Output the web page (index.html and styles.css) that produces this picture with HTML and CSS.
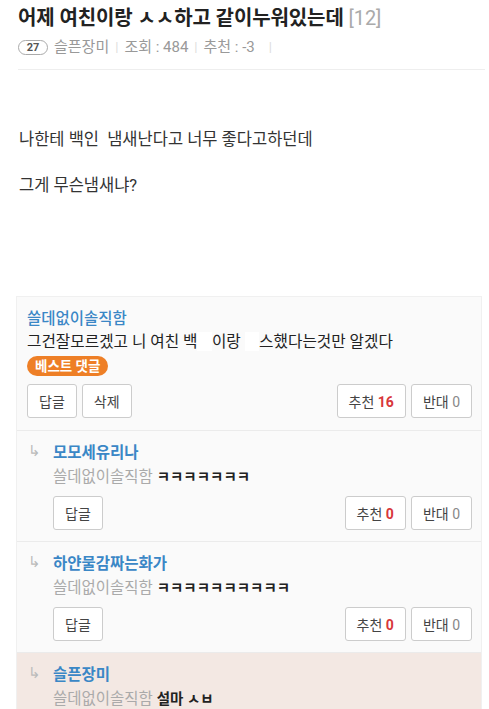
FILE: index.html
```html
<!DOCTYPE html>
<html>
	<head>
		<meta charset="UTF-8">
		<title>게시글</title>
		<link rel="stylesheet" href="styles.css">
	</head>
	<body>
		<div class="post-head">
			<h1 class="post-title">어제 여친이랑 ㅅㅅ하고 같이누워있는데 <span class="cmt-count">[12]</span></h1>
			<div class="post-meta">
				<span class="level">27</span>
				<span class="writer">슬픈장미</span>
				<span class="bar">|</span>
				<span>조회 : 484</span>
				<span class="bar">|</span>
				<span>추천 : -3</span>
				<span class="bar">|</span>
			</div>
		</div>

		<div class="post-body">
			<p>나한테 백인&nbsp; 냄새난다고 너무 좋다고하던데</p>
			<p><br></p>
			<p>그게 무슨냄새냐?</p>
		</div>

		<div class="comments">
			<div class="cmt">
				<div class="cmt-name">쓸데없이솔직함</div>
				<div class="cmt-text">그건잘모르겠고 니 여친 백<span class="mask">인</span>이랑 <span class="mask">섹</span>스했다는것만 알겠다</div>
				<span class="best">베스트 댓글</span>
				<div class="cmt-btns">
					<button class="btn">답글</button>
					<button class="btn">삭제</button>
					<span class="spacer"></span>
					<button class="btn">추천 <b class="red">16</b></button>
					<button class="btn">반대 <span class="num">0</span></button>
				</div>
			</div>
			<div class="cmt reply">
				<span class="arrow">↳</span>
				<div class="cmt-name">모모세유리나</div>
				<div class="cmt-text"><span class="to">쓸데없이솔직함</span> <b>ㅋㅋㅋㅋㅋㅋㅋ</b></div>
				<div class="cmt-btns">
					<button class="btn">답글</button>
					<span class="spacer"></span>
					<button class="btn">추천 <b class="red">0</b></button>
					<button class="btn">반대 <span class="num">0</span></button>
				</div>
			</div>
			<div class="cmt reply">
				<span class="arrow">↳</span>
				<div class="cmt-name">하얀물감짜는화가</div>
				<div class="cmt-text"><span class="to">쓸데없이솔직함</span> <b>ㅋㅋㅋㅋㅋㅋㅋㅋㅋㅋ</b></div>
				<div class="cmt-btns">
					<button class="btn">답글</button>
					<span class="spacer"></span>
					<button class="btn">추천 <b class="red">0</b></button>
					<button class="btn">반대 <span class="num">0</span></button>
				</div>
			</div>
			<div class="cmt reply mine">
				<span class="arrow">↳</span>
				<div class="cmt-name">슬픈장미</div>
				<div class="cmt-text"><span class="to">쓸데없이솔직함</span> <b>설마 ㅅㅂ</b></div>
			</div>
		</div>
	</body>
</html>
```

FILE: styles.css
```css
*{
	margin: 0;
	padding: 0;
	box-sizing: border-box;
}
body{
	font-family: Roboto, "Noto Sans CJK KR", sans-serif;
	color: #333;
	background: #fff;
	width: 489px;
	height: 709px;
	overflow: hidden;
}
.post-head{
	margin: 4px 4px 0 18px;
	padding-bottom: 12px;
	border-bottom: 1px solid #eee;
}
.post-title{
	font-size: 20px;
	line-height: 28px;
	font-weight: bold;
	color: #222;
	letter-spacing: -0.1px;
}
.post-title .cmt-count{
	color: #aaa;
	font-weight: normal;
}
.post-meta{
	margin-top: 5px;
	display: flex;
	align-items: center;
	gap: 6px;
	font-size: 15px;
	line-height: 20px;
	color: #999;
}
.post-meta .level{
	display: inline-block;
	width: 30px;
	height: 15px;
	line-height: 13px;
	border: 1px solid #aaa;
	border-radius: 8px;
	font-size: 11px;
	font-weight: bold;
	color: #555;
	text-align: center;
}
.post-meta .bar{
	color: #ddd;
	font-size: 13px;
}
.post-meta .bar:last-child{
	margin-left: 8px;
}
.post-body{
	padding: 58px 19px 0;
	font-size: 16.5px;
	line-height: 23px;
	color: #333;
}
.comments{
	margin: 99px 7px 0 16px;
	border: 1px solid #f0f0f0;
	background: #fafafa;
}
.cmt{
	position: relative;
	padding: 11px 9px 12px 10px;
	border-bottom: 1px solid #ebebeb;
}
.cmt-name{
	font-size: 15.5px;
	line-height: 22px;
	color: #3a87c6;
	font-weight: 500;
}
.cmt-text{
	height: 22px;
	font-size: 15.7px;
	line-height: 22px;
	color: #222;
	margin-top: 1px;
	white-space: nowrap;
}
.mask{
	color: #fff;
	background: #fff;
}
.best{
	display: inline-block;
	margin-top: 3px;
	padding: 0 8px;
	height: 20px;
	line-height: 20px;
	border-radius: 10px;
	background: #ee7f26;
	color: #fff;
	font-size: 13.5px;
	font-weight: bold;
}
.cmt-btns{
	display: flex;
	gap: 5px;
	margin-top: 8px;
}
.spacer{
	flex: 1;
}
.btn{
	height: 34px;
	min-width: 49px;
	padding: 0 11px;
	border: 1px solid #ccc;
	border-radius: 3px;
	background: #fff;
	font-family: Roboto, "Noto Sans CJK KR", sans-serif;
	font-size: 14px;
	color: #444;
}
.btn .red{
	color: #d8373b;
}
.btn .num{
	color: #888;
}
.reply{
	padding-left: 36px;
	padding-bottom: 11px;
}
.reply .cmt-name{
	font-weight: bold;
	font-size: 15.5px;
}
.reply .cmt-text{
	margin-top: 2px;
	font-size: 15.5px;
}
.reply .cmt-text .to{
	color: #aaa;
}
.reply .cmt-text b{
	color: #222;
	font-size: 14.5px;
	font-weight: bold;
	line-height: 1;
}
.arrow{
	position: absolute;
	left: 11px;
	top: 11px;
	font-size: 15px;
	color: #bbb;
}
.mine{
	background: #f3e8e3;
	border-bottom: none;
}
```
